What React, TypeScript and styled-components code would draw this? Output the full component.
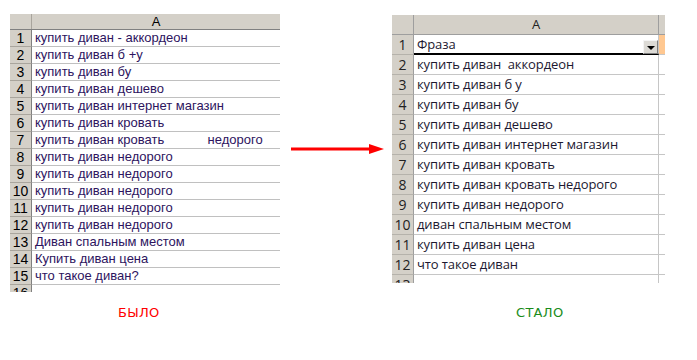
import styled, { createGlobalStyle } from "styled-components";

const GlobalStyle = createGlobalStyle`
  html, body {
    margin: 0;
    padding: 0;
    background: #ffffff;
  }
`;

const before = [
  "купить диван - аккордеон",
  "купить диван б +у",
  "купить диван бу",
  "купить диван дешево",
  "купить диван интернет магазин",
  "купить диван кровать",
  "купить диван кровать\u00a0\u00a0\u00a0\u00a0\u00a0\u00a0\u00a0\u00a0\u00a0\u00a0\u00a0\u00a0недорого",
  "купить диван недорого",
  "купить диван недорого",
  "купить диван недорого",
  "купить диван недорого",
  "купить диван недорого",
  "Диван спальным местом",
  "Купить диван цена",
  "что такое диван?",
  "",
];

const after = [
  "Фраза",
  "купить диван  аккордеон",
  "купить диван б у",
  "купить диван бу",
  "купить диван дешево",
  "купить диван интернет магазин",
  "купить диван кровать",
  "купить диван кровать недорого",
  "купить диван недорого",
  "диван спальным местом",
  "купить диван цена",
  "что такое диван",
  "",
];

const Page = styled.div`
  display: flex;
  align-items: flex-start;
  width: 697px;
  height: 360px;
`;

const Panel = styled.div<{ $top: number; $left: number }>`
  display: flex;
  flex-direction: column;
  margin-top: ${(p) => p.$top}px;
  margin-left: ${(p) => p.$left}px;
`;

/* ---------- old Excel (2003) sheet ---------- */

const OldSheet = styled.div`
  width: 270px;
  height: 278px;
  overflow: hidden;
  font-family: "Liberation Sans", Arial, sans-serif;
`;

const OldHeadRow = styled.div`
  display: flex;
  height: 15px;
  background: #d4d0c8;
  border-bottom: 1px solid #808080;
`;

const OldCorner = styled.div`
  width: 21px;
  border-right: 1px solid #a9a59d;
`;

const OldColHead = styled.div`
  flex: 1;
  text-align: center;
  font-size: 13px;
  line-height: 15px;
  color: #000;
`;

const OldRow = styled.div`
  display: flex;
  height: 17px;
`;

const OldNum = styled.div`
  width: 21px;
  background: #d4d0c8;
  border-right: 1px solid #808080;
  border-bottom: 1px solid #a9a59d;
  text-align: center;
  font-size: 14px;
  line-height: 16px;
  color: #000;
`;

const OldCell = styled.div`
  flex: 1;
  border-bottom: 1px solid #c0c0c0;
  padding-left: 3px;
  font-size: 13px;
  line-height: 16px;
  color: #2d145e;
  white-space: pre;
`;

/* ---------- new Excel (2007) sheet ---------- */

const NewSheet = styled.div`
  width: 273px;
  height: 268px;
  overflow: hidden;
  font-family: "Open Sans", "Liberation Sans", sans-serif;
`;

const NewHeadRow = styled.div`
  display: flex;
  height: 19px;
  background: #d4d0c8;
  border-bottom: 1px solid #9e9e9e;
`;

const NewCorner = styled.div`
  width: 21px;
  border-right: 1px solid #9e9e9e;
`;

const NewColHead = styled.div`
  width: 244px;
  border-right: 1px solid #9e9e9e;
  text-align: center;
  font-size: 13px;
  line-height: 19px;
  color: #222;
`;

const NewRow = styled.div`
  display: flex;
  height: 20px;
`;

const NewNum = styled.div`
  width: 21px;
  background: #d4d0c8;
  border-right: 1px solid #9e9e9e;
  border-bottom: 1px solid #b5b2ab;
  text-align: center;
  font-size: 14px;
  line-height: 19px;
  color: #222;
`;

const NewCell = styled.div<{ $title?: boolean }>`
  position: relative;
  width: 241px;
  padding-left: 3px;
  border-right: 1px solid #c6c6c6;
  border-bottom: ${(p) => (p.$title ? "2px solid #000" : "1px solid #c6c6c6")};
  height: ${(p) => (p.$title ? 18 : 19)}px;
  font-size: 13px;
  letter-spacing: -0.1px;
  line-height: 19px;
  color: #1c1830;
  white-space: pre;
`;

const NewEdge = styled.div<{ $accent?: boolean }>`
  width: 6px;
  background: ${(p) => (p.$accent ? "#ffc891" : "transparent")};
  border-bottom: 1px solid #c6c6c6;
`;

const NewHeadEdge = styled.div`
  width: 6px;
`;

const FilterButton = styled.div`
  position: absolute;
  right: 0;
  top: 5px;
  width: 13px;
  height: 12px;
  background: #dcdad5;
  border: 1px solid;
  border-color: #f4f4f4 #7d7d7d #7d7d7d #f4f4f4;
  display: flex;
  align-items: center;
  justify-content: center;

  &::after {
    content: "";
    margin-top: 1px;
    border-left: 4px solid transparent;
    border-right: 4px solid transparent;
    border-top: 4px solid #000;
  }
`;

/* ---------- arrow and captions ---------- */

const Arrow = styled.svg`
  flex: none;
  margin-top: 143px;
  margin-left: 11px;
  margin-right: 8px;
`;

const Caption = styled.div<{ $color: string; $indent: number; $gap: number }>`
  margin-top: ${(p) => p.$gap}px;
  padding-left: ${(p) => p.$indent}px;
  font-family: "DejaVu Sans", "Liberation Sans", sans-serif;
  font-size: 13px;
  letter-spacing: 0.3px;
  color: ${(p) => p.$color};
`;

export default function App() {
  return (
    <>
      <GlobalStyle />
      <Page>
        <Panel $top={14} $left={10}>
          <OldSheet>
            <OldHeadRow>
              <OldCorner />
              <OldColHead>A</OldColHead>
            </OldHeadRow>
            {before.map((text, i) => (
              <OldRow key={i}>
                <OldNum>{i + 1}</OldNum>
                <OldCell>{text}</OldCell>
              </OldRow>
            ))}
          </OldSheet>
          <Caption $color="#ff0000" $indent={108} $gap={13}>
            БЫЛО
          </Caption>
        </Panel>

        <Arrow width="93" height="12" viewBox="0 0 93 12">
          <rect x="0" y="4.5" width="80" height="3" fill="#ff0000" />
          <polygon points="78,1 93,6 78,11" fill="#ff0000" />
        </Arrow>

        <Panel $top={15} $left={0}>
          <NewSheet>
            <NewHeadRow>
              <NewCorner />
              <NewColHead>A</NewColHead>
              <NewHeadEdge />
            </NewHeadRow>
            {after.map((text, i) => (
              <NewRow key={i}>
                <NewNum>{i + 1}</NewNum>
                <NewCell $title={i === 0}>
                  {text}
                  {i === 0 && <FilterButton />}
                </NewCell>
                <NewEdge $accent={i === 0} />
              </NewRow>
            ))}
          </NewSheet>
          <Caption $color="#1a8c1a" $indent={124} $gap={22}>
            СТАЛО
          </Caption>
        </Panel>
      </Page>
    </>
  );
}
